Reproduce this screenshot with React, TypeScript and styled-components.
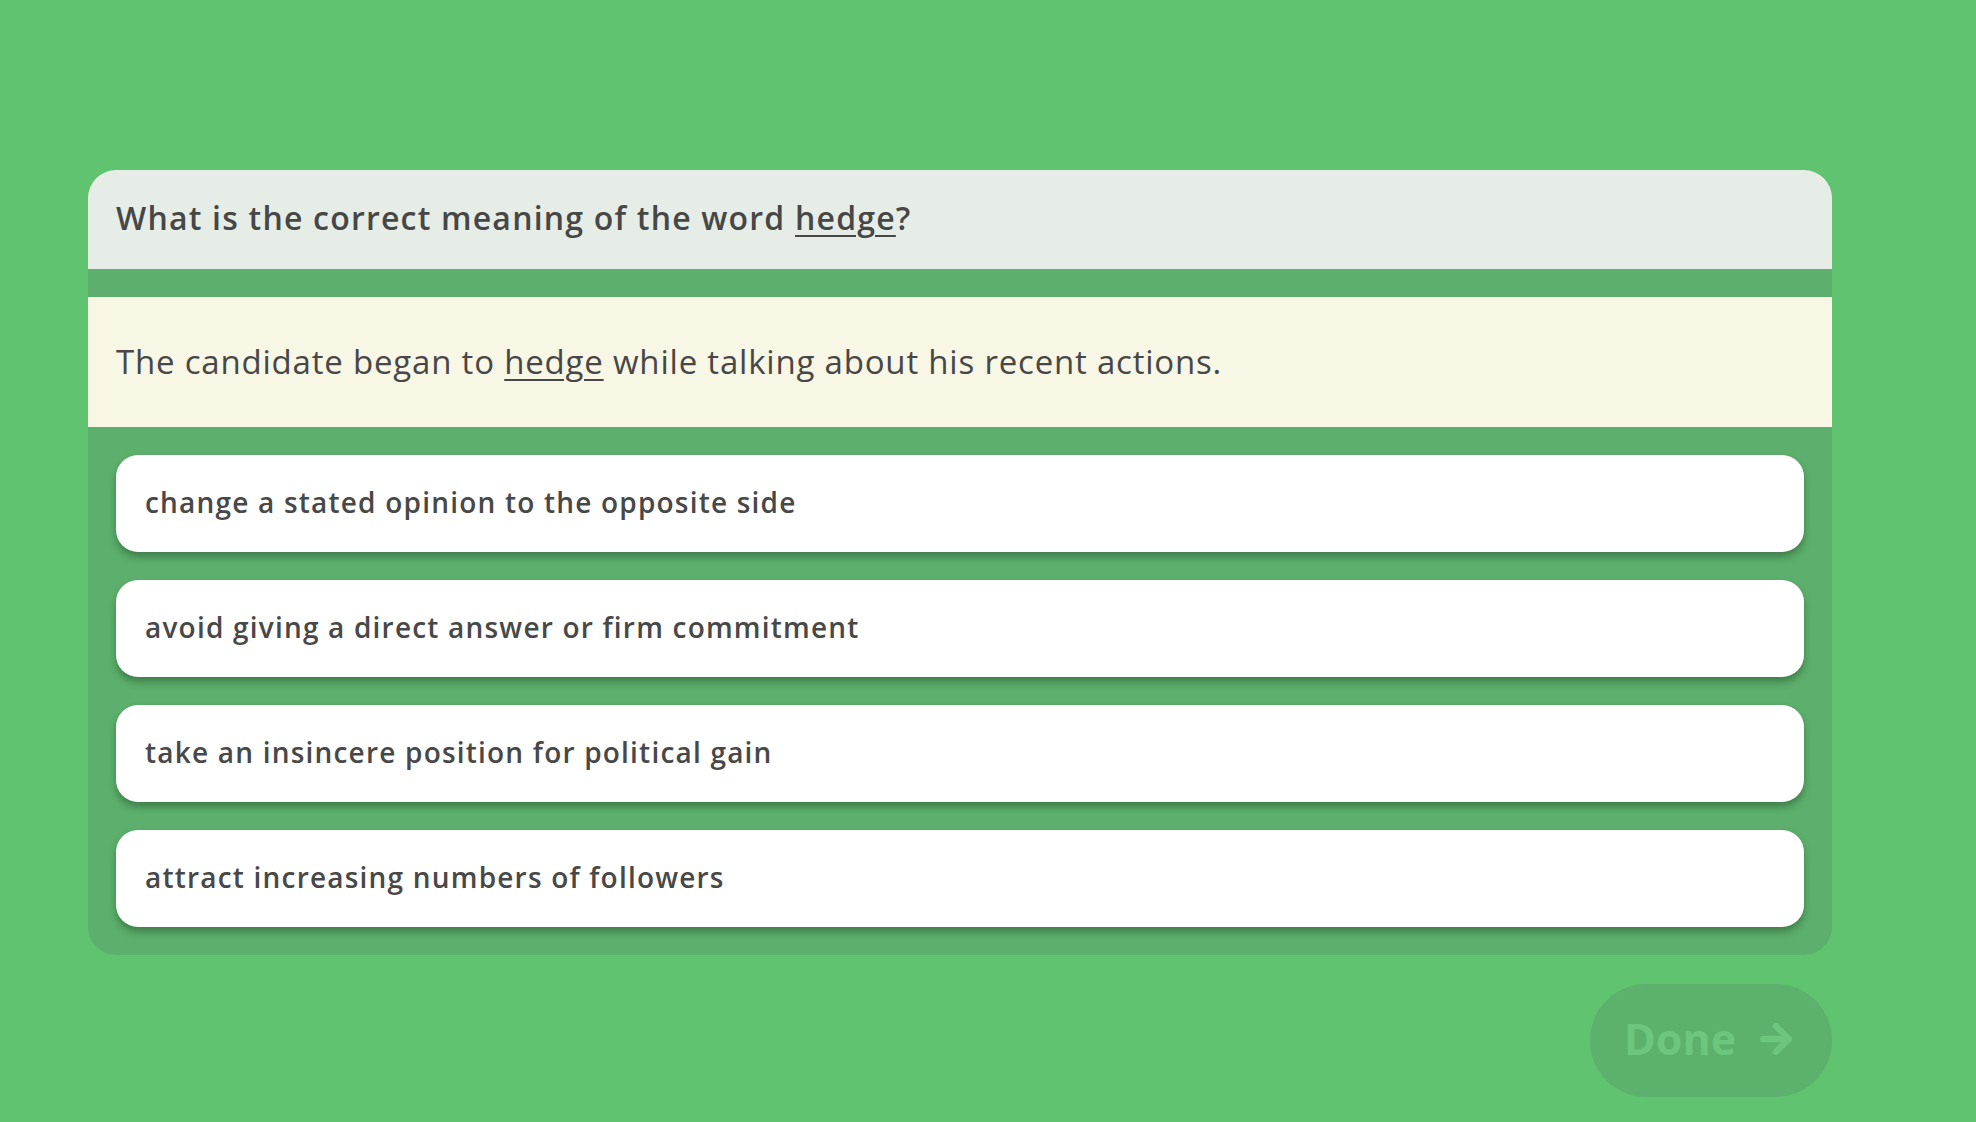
import React from 'react'
import styled, { createGlobalStyle } from 'styled-components'
import { ArrowRight } from 'lucide-react'

const GlobalStyle = createGlobalStyle`
    body {
        margin: 0;
        background: #5fc370;
        font-family: "Open Sans", "Liberation Sans", sans-serif;
        color: #474747;
    }
`

const Page = styled.div`
    min-height: 1122px;
    padding: 170px 0 0 88px;
    box-sizing: border-box;
`

const Column = styled.div`
    width: 1744px;
    display: flex;
    flex-direction: column;
`

const Card = styled.div`
    background: #5caf6c;
    border-radius: 28px;
    overflow: hidden;
    display: flex;
    flex-direction: column;
    gap: 28px;
    padding-bottom: 28px;
`

const Question = styled.div`
    background: #e6ede6;
    height: 99px;
    display: flex;
    align-items: center;
    padding: 0 28px 4px;
    box-sizing: border-box;
    font-size: 32px;
    font-weight: 600;
    letter-spacing: 1.2px;
`

const Sentence = styled.div`
    background: #f8f6e4;
    height: 130px;
    display: flex;
    align-items: center;
    padding: 0 28px 2px;
    box-sizing: border-box;
    font-size: 33px;
    font-weight: 400;
    letter-spacing: 0.8px;
`

const Word = styled.span`
    text-decoration: underline;
    text-decoration-thickness: 2px;
    text-underline-offset: 5px;
`

const Options = styled.div`
    display: flex;
    flex-direction: column;
    gap: 28px;
    padding: 0 28px;
`

const Option = styled.button`
    height: 97px;
    border: none;
    background: #ffffff;
    border-radius: 22px;
    box-shadow: 0 5px 7px rgba(30, 70, 35, 0.45);
    text-align: left;
    padding: 0 29px 3px;
    font-family: inherit;
    font-size: 28px;
    font-weight: 600;
    letter-spacing: 1.2px;
    color: #484848;
    cursor: pointer;
`

const Footer = styled.div`
    display: flex;
    justify-content: flex-end;
    margin-top: 29px;
`

const DoneButton = styled.button`
    width: 242px;
    height: 113px;
    border: none;
    border-radius: 57px;
    background: #5cb16d;
    color: #6dc67d;
    font-family: "Open Sans", sans-serif;
    font-weight: 700;
    font-size: 43px;
    display: flex;
    align-items: center;
    justify-content: center;
    gap: 18px;
    padding: 0 0 4px;
`

const options = [
    'change a stated opinion to the opposite side',
    'avoid giving a direct answer or firm commitment',
    'take an insincere position for political gain',
    'attract increasing numbers of followers',
]

export default function App() {
    return (
        <Page>
            <GlobalStyle />
            <Column>
                <Card>
                    <Question>
                        <span>What is the correct meaning of the word <Word>hedge</Word>?</span>
                    </Question>
                    <Sentence>
                        <span>The candidate began to <Word>hedge</Word> while talking about his recent actions.</span>
                    </Sentence>
                    <Options>
                        {options.map(o => (
                            <Option key={o}>{o}</Option>
                        ))}
                    </Options>
                </Card>
                <Footer>
                    <DoneButton disabled>
                        Done
                        <ArrowRight size={44} strokeWidth={3.5} />
                    </DoneButton>
                </Footer>
            </Column>
        </Page>
    )
}
